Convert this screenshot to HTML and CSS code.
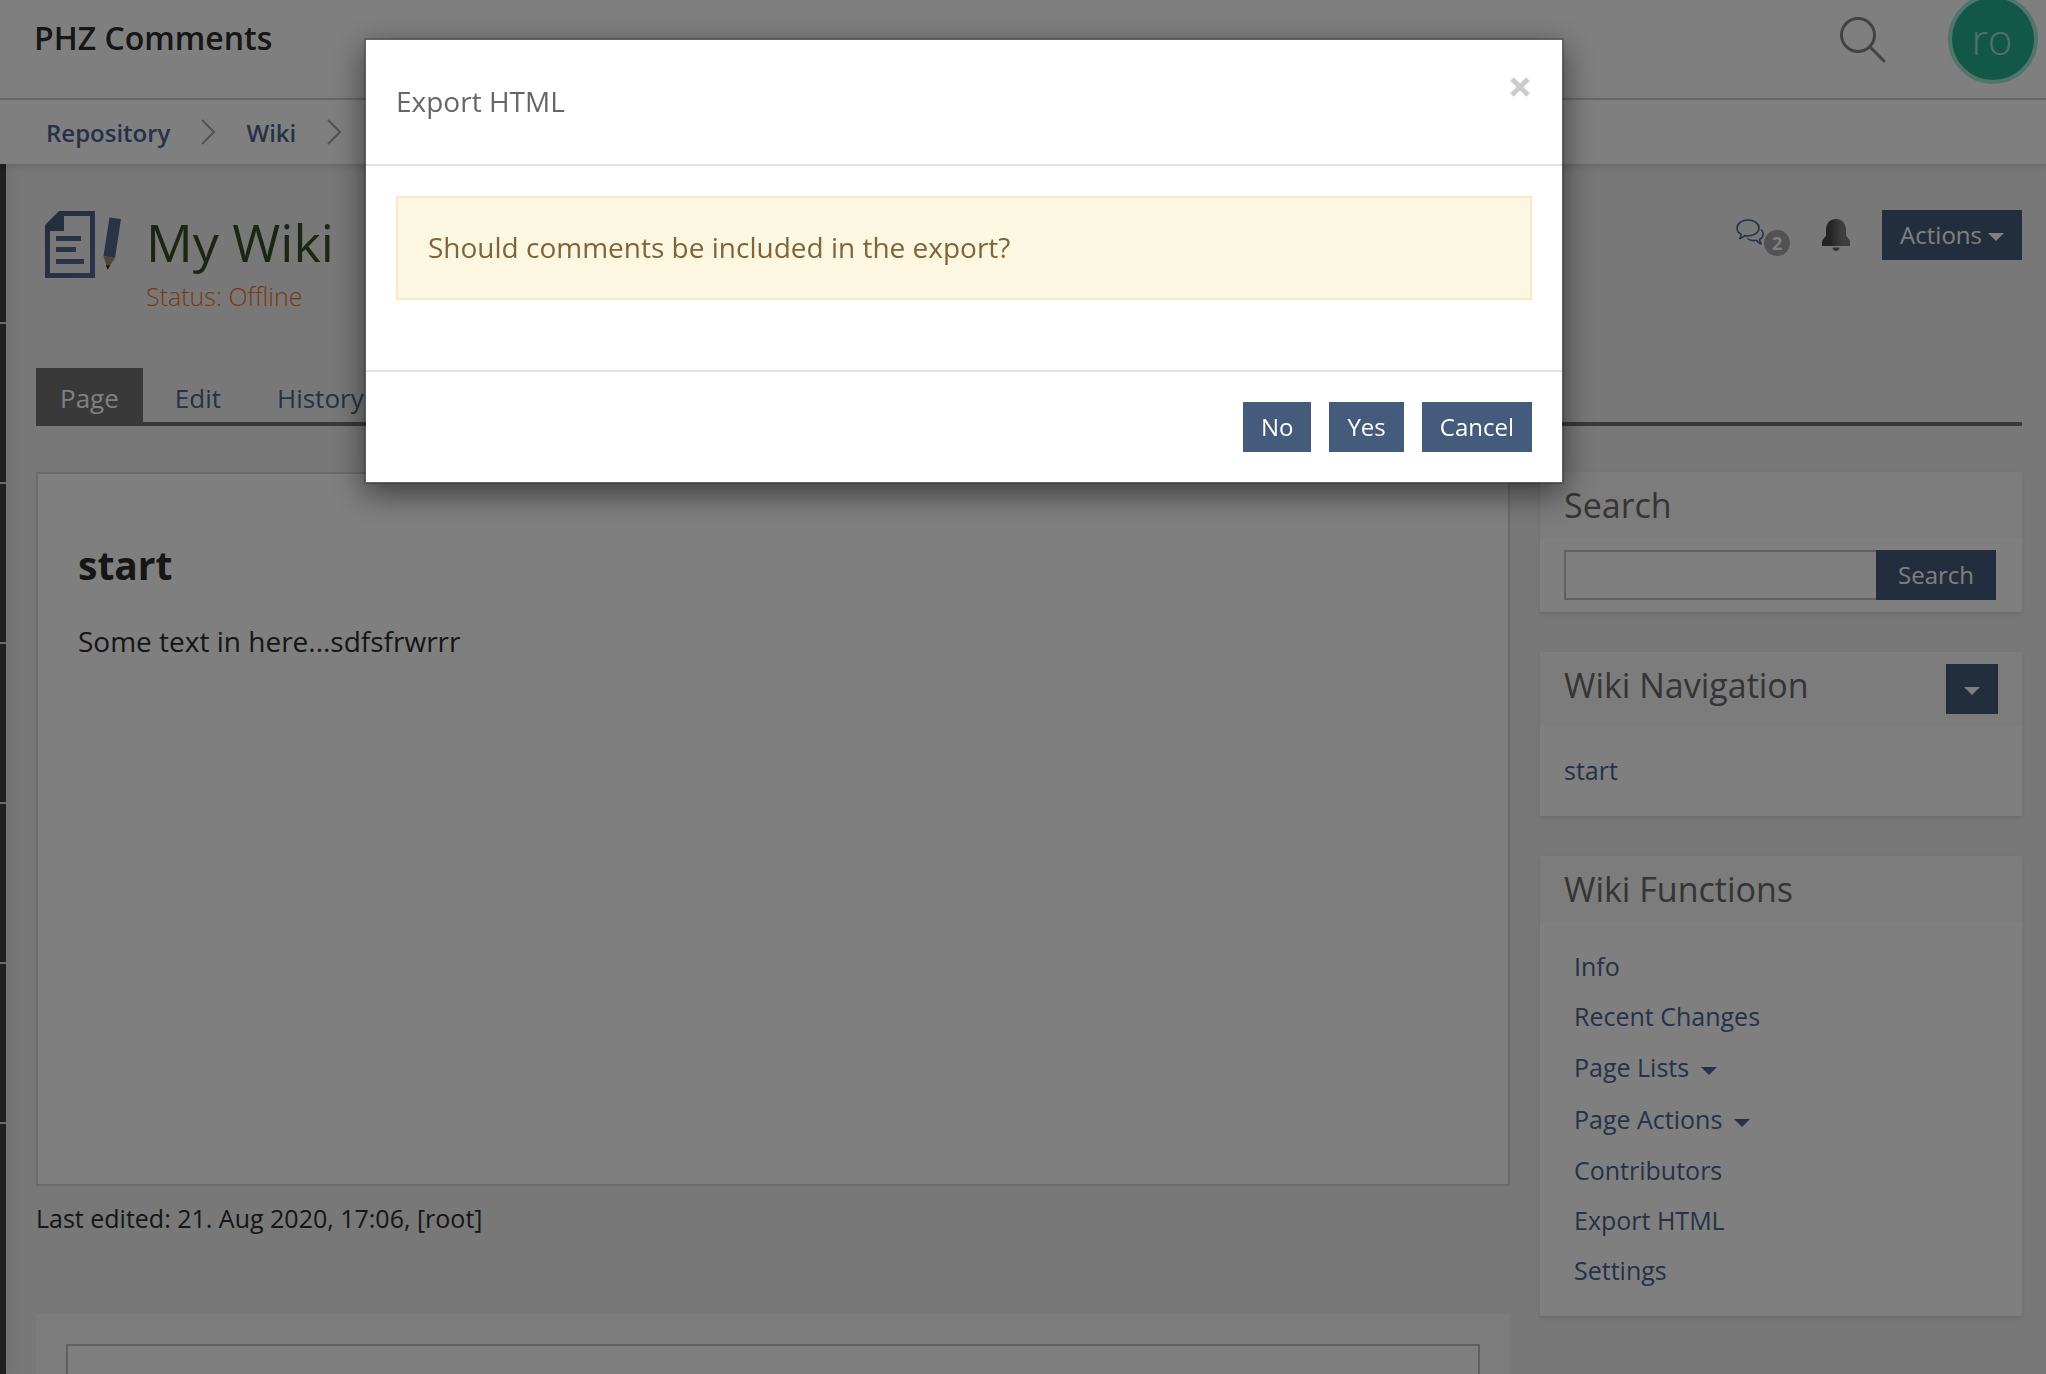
FILE: index.html
```html
<!DOCTYPE html>
<html lang="en">
<head>
    <meta charset="UTF-8">
    <meta name="viewport" content="width=device-width, initial-scale=1.0">
    <title>My Wiki</title>
    <link rel="stylesheet" href="styles.css">
</head>
<body>
    <div class="page">
        <header class="topbar">
            <div class="topbar-title">PHZ Comments</div>
            <button type="button" class="icon-btn" aria-label="Search">
                <svg width="48" height="48" viewBox="0 0 48 48" fill="none" stroke="#868686" stroke-width="3" stroke-linecap="round">
                    <circle cx="20" cy="20" r="16.5"/>
                    <path d="M32 32l14 14"/>
                </svg>
            </button>
            <button type="button" class="avatar">ro</button>
        </header>
        <nav class="breadcrumb">
            <a href="#">Repository</a>
            <svg width="14" height="26" viewBox="0 0 14 26" fill="none" stroke="#a6a6a6" stroke-width="2"><path d="M1 1l12 12L1 25"/></svg>
            <a href="#">Wiki</a>
            <svg width="14" height="26" viewBox="0 0 14 26" fill="none" stroke="#a6a6a6" stroke-width="2"><path d="M1 1l12 12L1 25"/></svg>
        </nav>

        <div class="layout">
            <div class="mainbar">
                <span></span><span></span><span></span><span></span><span></span><span></span>
            </div>

            <main class="content">
                <div class="page-head">
                    <svg class="wiki-icon" width="80" height="70" viewBox="0 0 80 70">
                        <defs>
                            <linearGradient id="ink" x1="0" y1="0" x2="1" y2="1">
                                <stop offset="0" stop-color="#4c5878"/>
                                <stop offset="1" stop-color="#586a94"/>
                            </linearGradient>
                        </defs>
                        <path fill="url(#ink)" fill-rule="evenodd" d="M15 1h36v67H1V15zM20 6v15H6v42h40V6z"/>
                        <path fill="#56678f" d="M12 26h25v5H12zM12 37h20v5H12zM12 49h28v5H12z"/>
                        <path fill="#56678f" d="M65.500 7.500l11.500 1.500-6 39-11.500-2z"/>
                        <path fill="#a58868" d="M59.500 46l11.500 2-7.500 11.500z"/>
                        <path fill="#222" d="M62 55l4 .8-2.500 4z"/>
                    </svg>
                    <div class="page-title">
                        <h1>My Wiki</h1>
                        <p>Status: Offline</p>
                    </div>
                    <div class="page-tools">
                        <button type="button" class="icon-btn comments" aria-label="Comments">
                            <svg width="28" height="28" viewBox="0 0 28 28" fill="none" stroke="#4c6490" stroke-width="1.600" stroke-linejoin="round">
                                <path d="M12 1C6 1 1 4.500 1 9c0 2.600 1.500 5 4.200 6.400 0 1.800-.7 3.200-1.500 4.300 2-.4 3.600-1.500 4.700-3.100 1.200.3 2.300.4 3.600.4 6 0 11-3.500 11-8s-5-8-11-8z"/>
                                <path d="M25 10.500c1.500 1.200 2.200 2.800 2.200 4.400 0 2.200-1.400 4.200-3.600 5.400.1 2 .8 3.400 1.600 4.600-2-.5-3.600-1.800-4.600-3.600-3.600.7-7 0-9.200-1.800"/>
                            </svg>
                            <span class="badge">2</span>
                        </button>
                        <button type="button" class="icon-btn" aria-label="Notifications">
                            <svg width="28" height="32" viewBox="0 0 28 32">
                                <defs>
                                    <linearGradient id="bell">
                                        <stop offset=".3" stop-color="#484848"/>
                                        <stop offset=".7" stop-color="#7c7c7c"/>
                                    </linearGradient>
                                </defs>
                                <path fill="url(#bell)" d="M14 0C8 0 4 4.500 4 11v5c0 2-4 4-4 7v4h28v-4c0-3-4-5-4-7v-5c0-6.500-4-11-10-11z"/>
                                <path fill="#666" d="M10.500 28.500h7c0 2-1.500 3.500-3.500 3.500s-3.500-1.500-3.500-3.500z"/>
                            </svg>
                        </button>
                        <button type="button" class="btn">Actions<span class="caret"></span></button>
                    </div>
                </div>

                <ul class="tabs">
                    <li class="active"><a href="#">Page</a></li>
                    <li><a href="#">Edit</a></li>
                    <li><a href="#">History</a></li>
                </ul>

                <div class="columns">
                    <div class="center-col">
                        <article class="wiki-page">
                            <h2>start</h2>
                            <p>Some text in here...sdfsfrwrrr</p>
                        </article>
                        <p class="last-edited">Last edited: 21. Aug 2020, 17:06, [root]</p>
                        <div class="comment-form">
                            <textarea aria-label="Comment"></textarea>
                        </div>
                    </div>

                    <aside class="side-col">
                        <section class="panel">
                            <div class="panel-head">
                                <h3>Search</h3>
                            </div>
                            <form class="search-form">
                                <input type="text" name="term" aria-label="Search term">
                                <button type="button" class="btn">Search</button>
                            </form>
                        </section>

                        <section class="panel">
                            <div class="panel-head has-menu">
                                <h3>Wiki Navigation</h3>
                                <button type="button" class="btn" aria-label="Navigation actions"><span class="caret"></span></button>
                            </div>
                            <div class="panel-body">
                                <a href="#">start</a>
                            </div>
                        </section>

                        <section class="panel">
                            <div class="panel-head">
                                <h3>Wiki Functions</h3>
                            </div>
                            <ul class="functions">
                                <li><a href="#">Info</a></li>
                                <li><a href="#">Recent Changes</a></li>
                                <li class="dropdown"><a href="#">Page Lists<span class="caret"></span></a></li>
                                <li class="dropdown"><a href="#">Page Actions<span class="caret"></span></a></li>
                                <li><a href="#">Contributors</a></li>
                                <li><a href="#">Export HTML</a></li>
                                <li><a href="#">Settings</a></li>
                            </ul>
                        </section>
                    </aside>
                </div>
            </main>
        </div>
    </div>

    <div class="modal-backdrop">
        <div class="modal" role="dialog" aria-labelledby="modalTitle">
            <div class="modal-header">
                <h4 id="modalTitle">Export HTML</h4>
                <button type="button" class="icon-btn" aria-label="Close">
                    <svg width="20" height="20" viewBox="0 0 20 20" stroke="#ccc" stroke-width="5"><path d="M2 2l16 16M18 2L2 18"/></svg>
                </button>
            </div>
            <div class="modal-body">
                <div class="alert">Should comments be included in the export?</div>
            </div>
            <div class="modal-footer">
                <button type="button" class="btn">No</button>
                <button type="button" class="btn">Yes</button>
                <button type="button" class="btn">Cancel</button>
            </div>
        </div>
    </div>
</body>
</html>
```

FILE: styles.css
```css
* {
    box-sizing: border-box;
}
body {
    margin: 0;
    font-family: "Open Sans", sans-serif;
    font-size: 25px;
    line-height: 36px;
    color: #2c2c2c;
    background-color: #f0f0f0;
    overflow: hidden;
}
h1, h2, h3, h4, p, ul {
    margin: 0;
    padding: 0;
    font-weight: normal;
}
ul {
    list-style: none;
}
a {
    color: #4c6490;
    text-decoration: none;
}
svg {
    display: block;
}
button, input, textarea {
    font-family: inherit;
}
.page {
    display: flex;
    flex-direction: column;
    height: 100vh;
    overflow: hidden;
}

/* Buttons */
.btn {
    display: inline-flex;
    align-items: center;
    justify-content: center;
    gap: 6px;
    height: 50px;
    padding: 0 18px;
    border: none;
    background-color: #455b7b;
    color: white;
    font-size: 24px;
    line-height: 36px;
    cursor: pointer;
}
.icon-btn {
    display: flex;
    padding: 0;
    border: none;
    background: none;
    cursor: pointer;
}
.caret {
    display: inline-block;
    border-top: 8px solid;
    border-left: 8px solid transparent;
    border-right: 8px solid transparent;
    margin-top: 4px;
}

/* Header */
.topbar {
    display: flex;
    align-items: center;
    flex: none;
    gap: 62px;
    height: 100px;
    padding: 0 8px 20px 34px;
    background-color: white;
    border-bottom: 2px solid #d6d6d6;
}
.topbar-title {
    flex: 1;
    padding-bottom: 2px;
    font-size: 32px;
    font-weight: 600;
}
.avatar {
    width: 90px;
    height: 90px;
    flex: none;
    padding: 0 2px 2px 0;
    border: 4px solid #a0ecd6;
    border-radius: 50%;
    background-color: #26b08e;
    color: #a0e4d0;
    font-size: 42px;
    font-weight: 300;
}
.breadcrumb {
    display: flex;
    align-items: center;
    flex: none;
    gap: 31px;
    height: 64px;
    padding: 0 46px;
    background-color: white;
    box-shadow: 0 2px 8px rgba(0, 0, 0, 0.15);
    font-size: 24px;
    font-weight: 600;
    z-index: 1;
}
.breadcrumb a {
    padding-top: 2px;
}

/* Layout */
.layout {
    display: flex;
    flex: 1;
    min-height: 0;
}
.mainbar {
    display: flex;
    flex-direction: column;
    width: 6px;
    background-color: #404040;
    box-shadow: 2px 0 16px rgba(0, 0, 0, 0.15);
}
.mainbar span {
    height: 160px;
    flex: none;
    border-bottom: 2px solid #ddd;
}
.content {
    flex: 1;
    padding: 46px 24px 0 30px;
}

.page-head {
    display: flex;
    height: 158px;
}
.wiki-icon {
    margin-left: 8px;
}
.page-title {
    flex: 1;
    margin-left: 22px;
}
.page-title h1 {
    margin-bottom: 4px;
    font-size: 52px;
    line-height: 64px;
    color: #364e26;
}
.page-title p {
    color: #f5701f;
    font-weight: 300;
}
.page-tools {
    display: flex;
    align-items: center;
    gap: 32px;
    height: 50px;
}
.comments {
    position: relative;
    align-items: flex-start;
    height: 32px;
    padding-right: 26px;
}
.badge {
    position: absolute;
    right: 0;
    top: 11px;
    width: 26px;
    height: 26px;
    border-radius: 50%;
    background-color: #a5a5a5;
    color: white;
    font-size: 18px;
    line-height: 26px;
    font-weight: bold;
    text-align: center;
}

/* Tabs */
.tabs {
    display: flex;
    gap: 8px;
    border-bottom: 4px solid #737373;
    font-size: 26px;
}
.tabs a {
    display: block;
    padding: 12px 24px 6px;
}
.tabs .active a {
    background-color: #737373;
    color: white;
}

.columns {
    display: grid;
    grid-template-columns: 1fr 482px;
    gap: 30px;
    margin-top: 46px;
}
.wiki-page {
    min-height: 714px;
    padding: 64px 40px;
    background-color: white;
    border: 2px solid #d6d6d6;
    font-size: 28px;
    line-height: 40px;
}
.wiki-page h2 {
    margin-bottom: 29px;
    font-size: 39px;
    line-height: 54px;
    font-weight: bold;
}
.last-edited {
    margin: 14px 0 78px;
}
.comment-form {
    padding: 30px;
    background-color: #f9f9f9;
}
.comment-form textarea {
    display: block;
    width: 100%;
    height: 160px;
    border: 2px solid #c0c0c0;
    background-color: white;
    resize: none;
}

/* Right column */
.side-col {
    display: flex;
    flex-direction: column;
    gap: 40px;
}
.panel {
    background-color: white;
    box-shadow: 0 2px 4px rgba(0, 0, 0, 0.1);
}
.panel-head {
    display: flex;
    justify-content: space-between;
    padding: 10px 24px;
    background-color: #f9f9f9;
}
.panel-head h3 {
    font-size: 34px;
    line-height: 46px;
    color: #6a6a6a;
}
.has-menu {
    padding-bottom: 12px;
}
.has-menu .btn {
    width: 52px;
    margin-top: 2px;
    padding: 0;
}
.search-form {
    display: flex;
    padding: 12px 26px 12px 24px;
}
.search-form input {
    flex: 1;
    min-width: 0;
    height: 50px;
    padding: 0 12px;
    border: 2px solid #c0c0c0;
    border-right: none;
    font-size: 24px;
}
.search-form .btn {
    padding: 0 22px;
}
.panel-body {
    padding: 26px 24px 28px;
}
.functions {
    padding: 19px 34px 21px;
}
.functions li {
    padding: 7px 0;
}
.functions .dropdown {
    padding: 8px 0;
}
.functions .caret {
    margin-left: 12px;
    vertical-align: 2px;
}

/* Modal */
.modal-backdrop {
    position: fixed;
    inset: 0;
    display: flex;
    justify-content: center;
    align-items: flex-start;
    padding: 38px 118px 0 0;
    background-color: rgba(0, 0, 0, 0.5);
    z-index: 10;
}
.modal {
    width: 1200px;
    max-width: 100%;
    background-color: white;
    background-clip: padding-box;
    border: 2px solid rgba(0, 0, 0, 0.2);
    box-shadow: 0 10px 30px rgba(0, 0, 0, 0.5);
}
.modal-header {
    display: flex;
    justify-content: space-between;
    align-items: flex-start;
    padding: 37px 32px 39px 30px;
    border-bottom: 2px solid #e1e1e1;
}
.modal-header h4 {
    font-size: 28px;
    line-height: 48px;
    color: #666;
}
.modal-body {
    padding: 30px 30px 70px;
}
.alert {
    padding: 29px 30px 31px;
    background-color: #fcf7e1;
    border: 2px solid #f8e8c8;
    color: #80643a;
    font-size: 28px;
    line-height: 40px;
}
.modal-footer {
    display: flex;
    justify-content: flex-end;
    gap: 18px;
    padding: 30px;
    border-top: 2px solid #e1e1e1;
}
```
